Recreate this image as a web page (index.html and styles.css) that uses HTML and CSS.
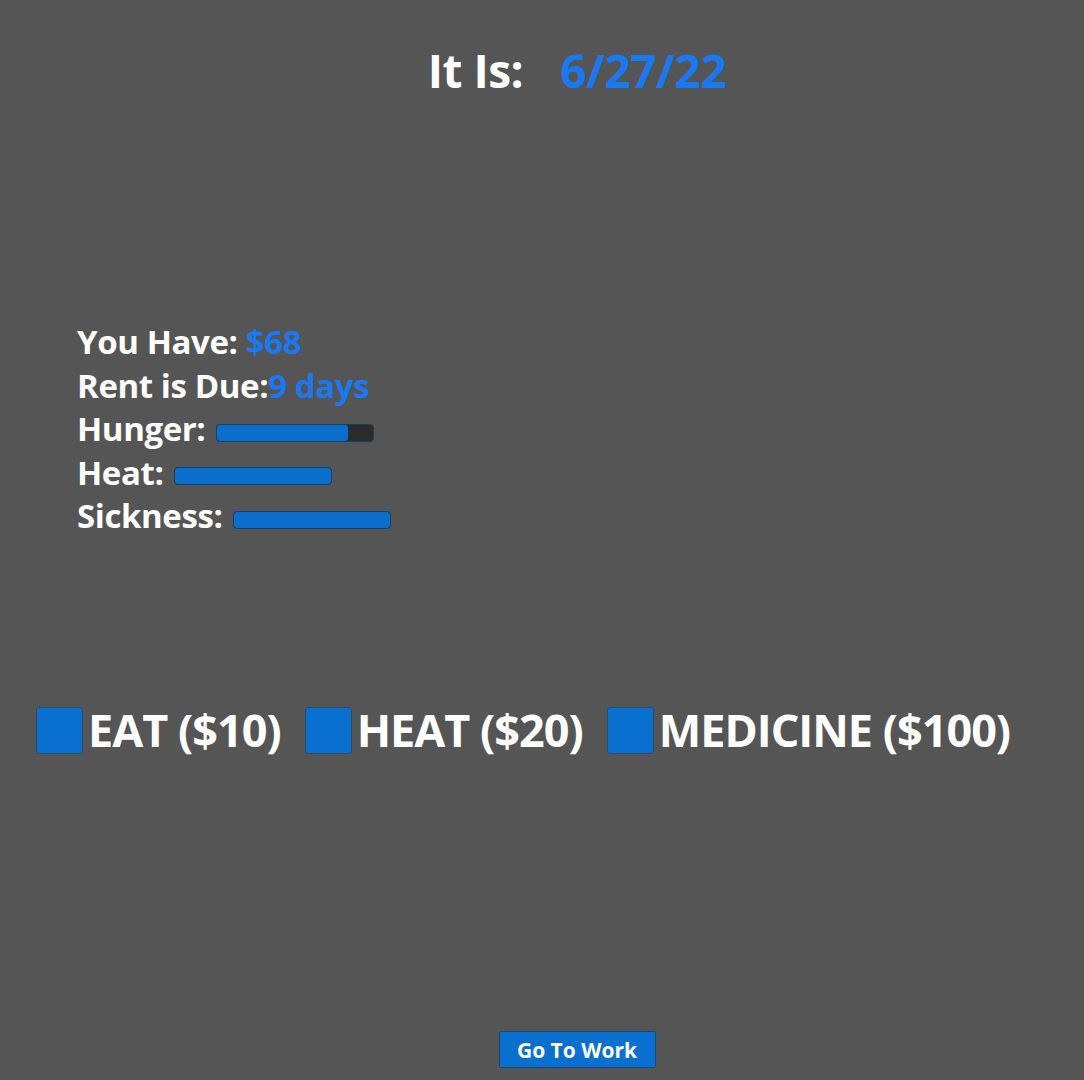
FILE: index.html
```html
<!DOCTYPE html>
<html lang="en">
<head>
	<meta charset="UTF-8">
	<title>rent game</title>
	<link rel="stylesheet" href="styles.css">
</head>
<body>
	<div class="game">
		<h1 class="date-line"><span>It Is:</span><span class="val date">6/27/22</span></h1>

		<div class="stats">
			<div class="row">You Have: <span class="val">$68</span></div>
			<div class="row">Rent is Due:<span class="val">9 days</span></div>
			<div class="row">Hunger: <span class="bar"><span class="fill" style="width: 84%"></span></span></div>
			<div class="row">Heat: <span class="bar"><span class="fill" style="width: 100%"></span></span></div>
			<div class="row">Sickness: <span class="bar"><span class="fill" style="width: 100%"></span></span></div>
		</div>

		<div class="actions">
			<label class="act"><span class="box"></span>EAT ($10)</label>
			<label class="act"><span class="box"></span>HEAT ($20)</label>
			<label class="act"><span class="box"></span>MEDICINE ($100)</label>
		</div>

		<div class="work">
			<button class="work-btn">Go To Work</button>
		</div>
	</div>
</body>
</html>
```

FILE: styles.css
```css
html, body {
	width: 100%;
	height: 100%;
	margin: 0;
	padding: 0;
}

body {
	background: #555555;
	color: #fff;
	font-family: "Open Sans", "Noto Sans", sans-serif;
	font-weight: 700;
}

.game {
	display: flex;
	flex-direction: column;
	height: 1080px;
}

.val {
	color: #1a78f0;
}

.date-line {
	display: flex;
	justify-content: center;
	gap: 37px;
	margin: 47px 0 0 70px;
	font-size: 46px;
	line-height: 46px;
	font-weight: 700;
	letter-spacing: -0.5px;
}

.stats {
	margin: 227px 0 0 77px;
	font-size: 33px;
	line-height: 43.5px;
	letter-spacing: -0.4px;
}
.row {
	display: flex;
	align-items: center;
	white-space: pre;
}

.bar {
	display: inline-block;
	box-sizing: border-box;
	width: 158px;
	height: 18px;
	margin: 8px 0 0 2px;
	background: #2b2b2b;
	border: 1px solid #173f66;
	border-radius: 4px;
	overflow: hidden;
}
.fill {
	display: block;
	height: 100%;
	background: #0a6fcc;
	border-radius: 3px;
}

.actions {
	display: flex;
	gap: 24px;
	margin: 167px 0 0 36px;
	font-size: 45px;
	line-height: 47px;
	letter-spacing: -1px;
}
.act {
	display: flex;
	align-items: center;
	gap: 5px;
	cursor: pointer;
}
.box {
	display: block;
	box-sizing: border-box;
	width: 47px;
	height: 47px;
	margin-top: 2px;
	background: #0a70d0;
	border: 1px solid #2d4a66;
	border-radius: 3px;
}

.work {
	margin-top: auto;
	padding: 0 0 12px 70px;
	display: flex;
	justify-content: center;
}
.work-btn {
	width: 157px;
	height: 37px;
	padding: 0;
	background: #0a70d0;
	color: #fff;
	border: 1px solid #1b4670;
	border-radius: 2px;
	font-family: inherit;
	font-weight: 700;
	font-size: 21px;
}
```
